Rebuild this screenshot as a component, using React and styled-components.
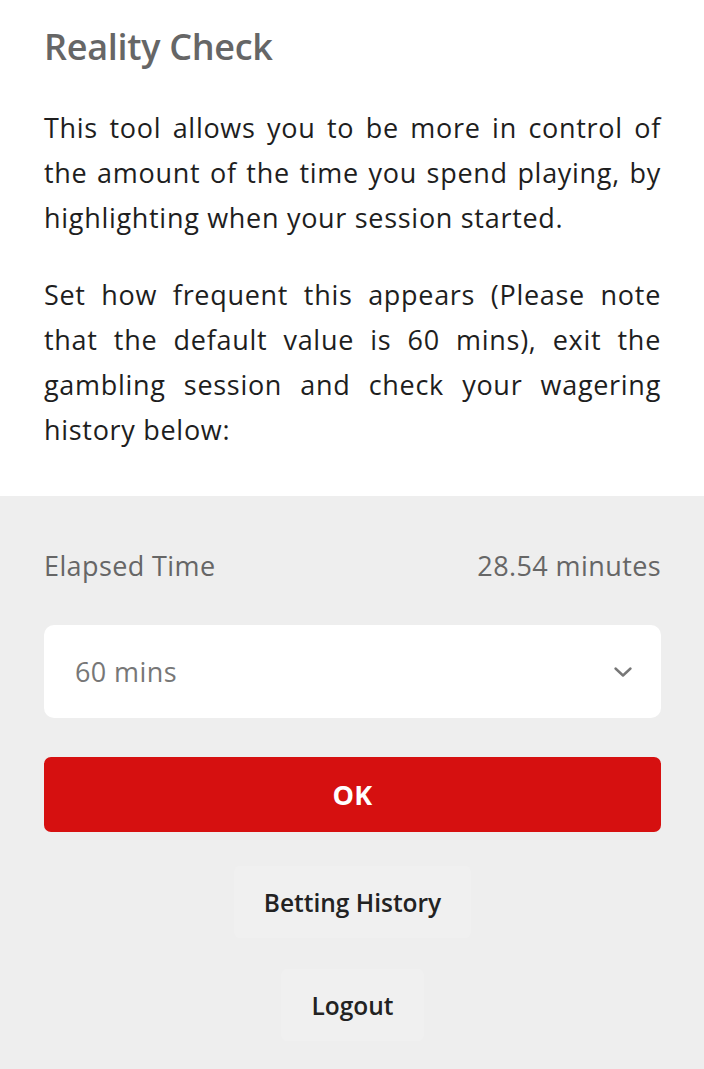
import React from "react";
import styled, {createGlobalStyle} from "styled-components";

const GlobalStyle = createGlobalStyle`
    html, body {
        margin: 0;
        padding: 0;
        background: #eeeeee;
    }

    body {
        font-family: "Open Sans", "Noto Sans", sans-serif;
        -webkit-font-smoothing: antialiased;
    }
`;

function Chevron() {
    return (
        <svg width="20" height="20" viewBox="0 0 20 20" fill="none">
            <path d="M2.5 6.5 L10 13.5 L17.5 6.5" stroke="#777" strokeWidth="2.4" strokeLinecap="round"
                  strokeLinejoin="round"/>
        </svg>
    );
}

function App() {
    return (
        <>
            <GlobalStyle/>
            <Page>
                <Intro>
                    <Title>Reality Check</Title>
                    <Text>
                        This tool allows you to be more in control of the amount of the time you spend
                        playing, by highlighting when your session started.
                    </Text>
                    <Text>
                        Set how frequent this appears (Please note that the default value is 60 mins),
                        exit the gambling session and check your wagering history below:
                    </Text>
                </Intro>
                <Controls>
                    <InfoRow>
                        <span>Elapsed Time</span>
                        <span>28.54 minutes</span>
                    </InfoRow>
                    <Select>
                        <span>60 mins</span>
                        <Chevron/>
                    </Select>
                    <PrimaryButton>OK</PrimaryButton>
                    <LinkButton>Betting History</LinkButton>
                    <LinkButton>Logout</LinkButton>
                </Controls>
            </Page>
        </>
    );
}

export default App;

const Page = styled.div`
    width: 704px;
    min-height: 1069px;
    display: flex;
    flex-direction: column;
    background: #eeeeee;
`;

const Intro = styled.section`
    background: #ffffff;
    padding: 25px 43px 44px 44px;
    display: flex;
    flex-direction: column;
`;

const Title = styled.h1`
    margin: 0 0 36px;
    font-size: 36px;
    line-height: 44px;
    font-weight: 600;
    color: #666666;
    letter-spacing: -0.3px;
`;

const Text = styled.p`
    margin: 0;
    font-size: 27px;
    line-height: 45px;
    color: #1e1e1e;
    text-align: justify;
    letter-spacing: 0.7px;

    & + & {
        margin-top: 32px;
    }
`;

const Controls = styled.section`
    flex: 1;
    padding: 52px 43px 29px 44px;
    display: flex;
    flex-direction: column;
    align-items: center;
`;

const InfoRow = styled.div`
    align-self: stretch;
    display: flex;
    justify-content: space-between;
    font-size: 27px;
    line-height: 36px;
    color: #666666;
    letter-spacing: 0.4px;
    margin-bottom: 41px;
`;

const Select = styled.div`
    align-self: stretch;
    height: 93px;
    box-sizing: border-box;
    padding: 0 28px 0 31px;
    display: flex;
    align-items: center;
    justify-content: space-between;
    background: #ffffff;
    border-radius: 10px;
    font-size: 27px;
    color: #777777;
    letter-spacing: 0.4px;
    margin-bottom: 39px;
`;

const PrimaryButton = styled.button`
    align-self: stretch;
    height: 75px;
    border: none;
    border-radius: 7px;
    background: #d61010;
    color: #ffffff;
    font-family: inherit;
    font-size: 27px;
    font-weight: 700;
    letter-spacing: 0.3px;
    cursor: pointer;
    margin-bottom: 34px;
`;

const LinkButton = styled.button`
    height: 72px;
    padding: 0 30px;
    border: none;
    border-radius: 6px;
    background: #f0f0f0;
    color: #222222;
    font-family: inherit;
    font-size: 24.5px;
    font-weight: 600;
    letter-spacing: 0;
    cursor: pointer;

    & + & {
        margin-top: 31px;
    }
`;
